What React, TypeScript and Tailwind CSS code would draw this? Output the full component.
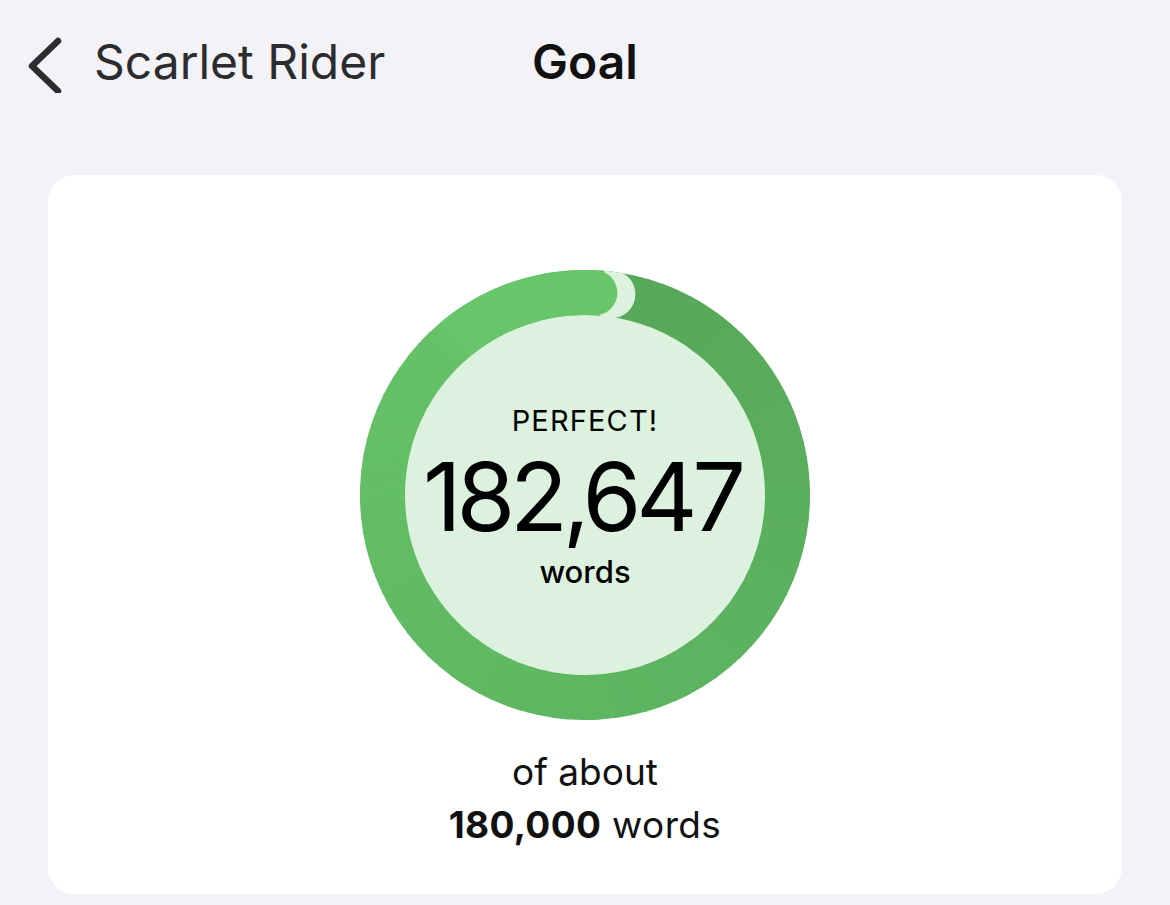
const CX = 225
const CY = 225
const R = 202.5
const W = 45

const pt = (deg: number, r = R) => {
  const a = (deg * Math.PI) / 180
  return [CX + r * Math.sin(a), CY - r * Math.cos(a)]
}

const arc = (from: number, to: number) => {
  const [x1, y1] = pt(from)
  const [x2, y2] = pt(to)
  const large = to - from > 180 ? 1 : 0
  return `M ${x1} ${y1} A ${R} ${R} 0 ${large} 1 ${x2} ${y2}`
}

const dark = [0x56, 0xa7, 0x58]
const light = [0x67, 0xc5, 0x6a]
const mix = (t: number) =>
  `rgb(${dark.map((d, i) => Math.round(d + (light[i] - d) * t)).join(',')})`

const segments = Array.from({ length: 90 }, (_, i) => i * 4)

const Ring = () => {
  const [ex, ey] = pt(2.8)
  const [sx, sy] = pt(7.5)
  return (
    <svg width="450" height="450" viewBox="0 0 450 450" className="[grid-area:1/1]">
      <defs>
        <clipPath id="outer">
          <circle cx={CX} cy={CY} r={R + W / 2} />
        </clipPath>
      </defs>
      <circle cx={CX} cy={CY} r={R - W / 2 + 1} fill="#dcf2de" />
      {segments.map((s) => (
        <path
          key={s}
          d={arc(s, Math.min(s + 4.6, 360))}
          stroke={mix((s + 2) / 360)}
          strokeWidth={W}
          fill="none"
        />
      ))}
      {/* overlap past 100%: cap with a soft light edge */}
      <g clipPath="url(#outer)">
        <circle cx={sx} cy={sy} r={24} fill="#dcf2de" />
      </g>
      <path d={arc(-40, 2.8)} stroke={mix(1)} strokeWidth={W} fill="none" />
      <circle cx={ex} cy={ey} r={W / 2} fill={mix(1)} />
    </svg>
  )
}

export default function App() {
  return (
    <div className="w-[1170px] h-[905px] bg-[#f2f2f7] overflow-hidden font-['Inter',sans-serif]">
      <header className="grid grid-cols-3 items-center h-[125px]">
        <div className="flex items-center pl-[26px] gap-[28px] text-[#2c2c2e]">
          <svg width="40" height="60" viewBox="0 0 40 60">
            <path
              d="M 32 8 L 6 33 L 32 58"
              stroke="#2c2c2e"
              strokeWidth="6.5"
              strokeLinecap="round"
              strokeLinejoin="round"
              fill="none"
            />
          </svg>
          <span className="text-[48px] tracking-[0em] leading-none -mt-[2px]">Scarlet Rider</span>
        </div>
        <div className="text-center text-[48px] font-semibold text-[#111] leading-none -mt-[2px]">Goal</div>
        <div />
      </header>

      <section className="ml-[48px] mt-[50px] w-[1074px] h-[719px] bg-white rounded-[26px] flex flex-col items-center pt-[95px]">
        <div className="grid place-items-center">
          <Ring />
          <div className="[grid-area:1/1] flex flex-col items-center text-black">
            <span className="text-[29px] tracking-[0.04em] leading-none mt-[2px]">PERFECT!</span>
            <span className="text-[95px] tracking-[-0.055em] leading-none mt-[14px] -ml-[6px]">182,647</span>
            <span className="text-[31px] font-medium leading-none mt-[12px]">words</span>
          </div>
        </div>
        <p className="text-[37px] leading-none text-[#111] mt-[33px]">of about</p>
        <p className="text-[37px] leading-none text-[#111] mt-[16px] tracking-[0.01em]">
          <span className="font-bold">180,000</span> words
        </p>
      </section>
    </div>
  )
}
